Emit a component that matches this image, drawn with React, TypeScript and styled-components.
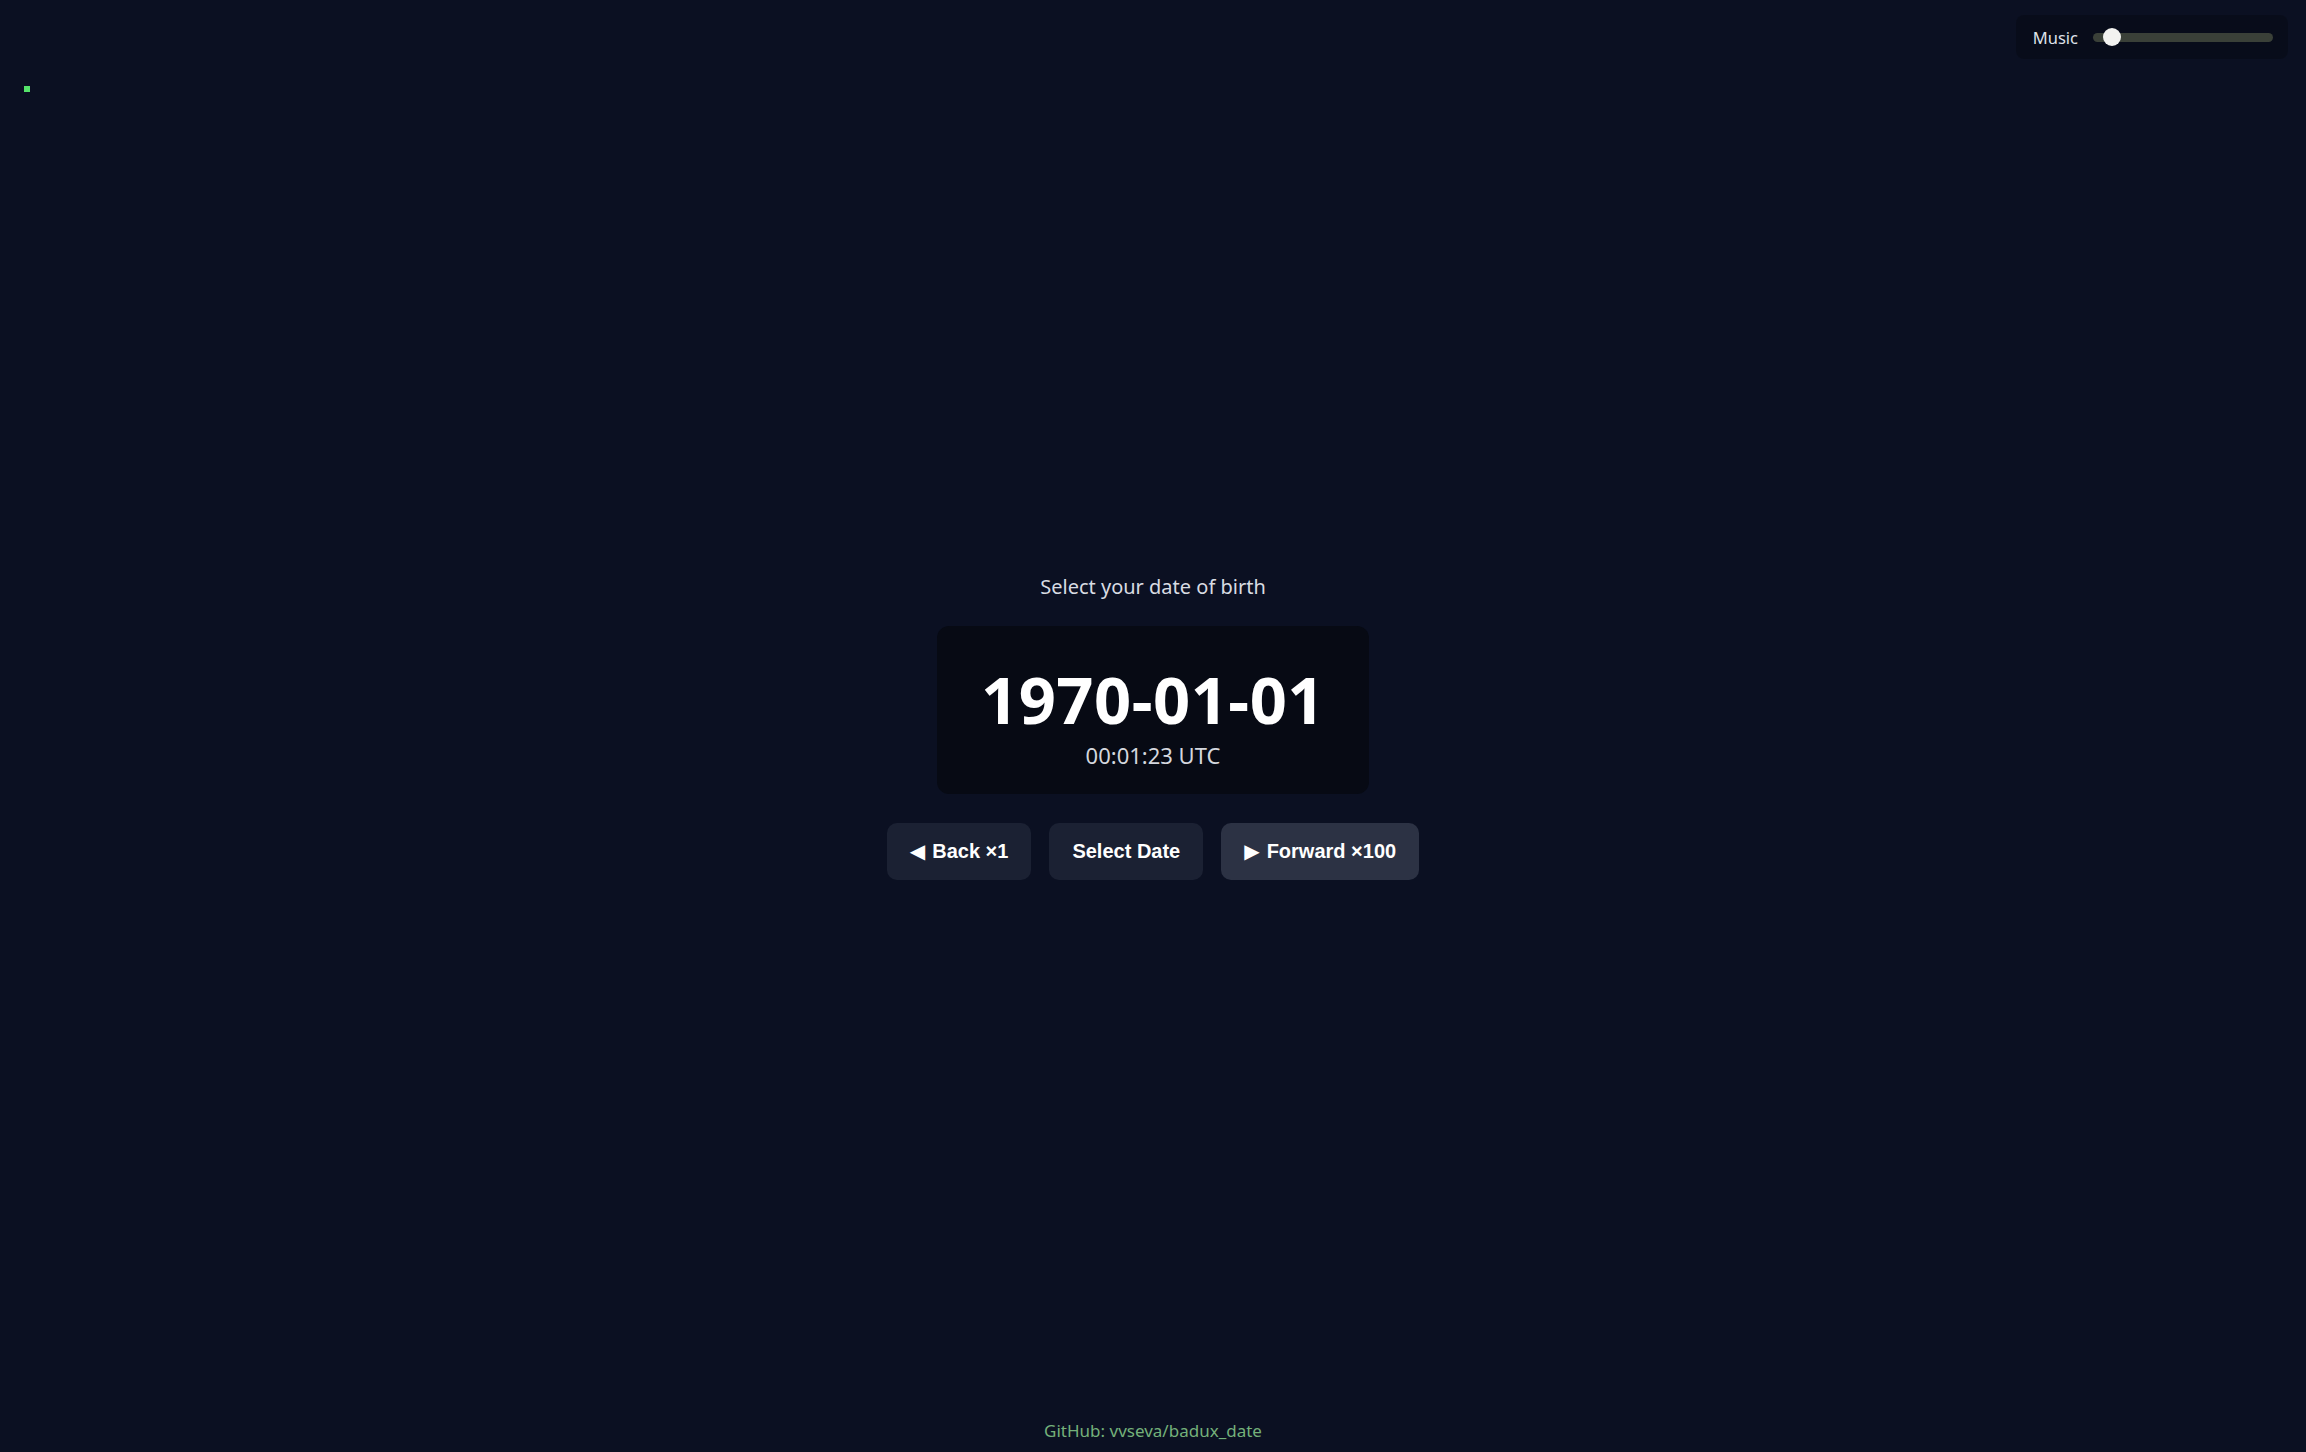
import React, { useState } from "react";
import styled, { createGlobalStyle } from "styled-components";

const GlobalStyle = createGlobalStyle`
  html, body { margin: 0; padding: 0; background: #0b1022; }
  body { font-family: "Noto Sans", "Open Sans", sans-serif; color: #e6e8ee; }
  * { box-sizing: border-box; }
`;

const Page = styled.div`
  min-height: 100vh;
  display: grid;
  grid-template-rows: 100px 1fr 100px;
  background: #0b1022;
`;

const TopBar = styled.header`
  display: flex;
  justify-content: space-between;
  align-items: flex-start;
  padding: 15px 18px 0 24px;
`;

const StatusDot = styled.span`
  width: 6px;
  height: 6px;
  margin-top: 71px;
  background: #55e36a;
`;

const MusicPanel = styled.div`
  display: flex;
  align-items: center;
  gap: 15px;
  height: 44px;
  padding: 0 15px 0 17px;
  border-radius: 8px;
  background: rgba(0, 0, 0, 0.22);
`;

const MusicLabel = styled.span`
  font-size: 16.5px;
  color: #dfe2e8;
`;

const Slider = styled.input`
  -webkit-appearance: none;
  appearance: none;
  width: 180px;
  height: 9px;
  margin: 0;
  border-radius: 5px;
  background: #3a4038;
  outline: none;
  &::-webkit-slider-thumb {
    -webkit-appearance: none;
    appearance: none;
    width: 18px;
    height: 18px;
    border-radius: 50%;
    background: #f2f2f0;
    border: none;
    cursor: pointer;
  }
`;

const Main = styled.main`
  display: flex;
  flex-direction: column;
  align-items: center;
  justify-content: center;
`;

const Prompt = styled.div`
  font-size: 20px;
  color: #d9dce3;
  margin-bottom: 26px;
`;

const Card = styled.div`
  width: 432px;
  height: 168px;
  border-radius: 12px;
  background: #070a14;
  display: flex;
  flex-direction: column;
  align-items: center;
  justify-content: flex-start;
  gap: 10px;
  padding-top: 41px;
`;

const DateText = styled.div`
  font-size: 65px;
  font-weight: 700;
  line-height: 1;
  color: #ffffff;
  letter-spacing: 0.5px;
`;

const TimeText = styled.div`
  font-size: 22px;
  line-height: 1.2;
  color: #d4d7de;
`;

const ButtonRow = styled.div`
  display: flex;
  gap: 18px;
  margin-top: 29px;
`;

const Button = styled.button<{ $hover?: boolean }>`
  height: 57px;
  padding: 0 23px;
  border: none;
  border-radius: 10px;
  font-family: "Liberation Sans", Arial, sans-serif;
  font-weight: 700;
  font-size: 20px;
  color: #ffffff;
  background: ${(p) => (p.$hover ? "#2c3244" : "#1b2133")};
  cursor: pointer;
  display: flex;
  align-items: center;
  gap: 7px;
`;

const Arrow = styled.span`
  font-family: "DejaVu Sans", sans-serif;
  font-size: 20px;
  line-height: 1;
`;

const Footer = styled.footer`
  display: flex;
  justify-content: center;
  align-items: flex-end;
  padding-bottom: 10px;
`;

const RepoLink = styled.a`
  font-size: 17px;
  color: #74b07a;
  text-decoration: none;
`;

export default function App() {
  const [volume, setVolume] = useState(6);
  return (
    <>
      <GlobalStyle />
      <Page>
        <TopBar>
          <StatusDot />
          <MusicPanel>
            <MusicLabel>Music</MusicLabel>
            <Slider
              type="range"
              min={0}
              max={100}
              value={volume}
              onChange={(e) => setVolume(Number(e.target.value))}
            />
          </MusicPanel>
        </TopBar>
        <Main>
          <Prompt>Select your date of birth</Prompt>
          <Card>
            <DateText>1970-01-01</DateText>
            <TimeText>00:01:23 UTC</TimeText>
          </Card>
          <ButtonRow>
            <Button>
              <Arrow>◀</Arrow>Back ×1
            </Button>
            <Button>Select Date</Button>
            <Button $hover>
              <Arrow>▶</Arrow>Forward ×100
            </Button>
          </ButtonRow>
        </Main>
        <Footer>
          <RepoLink href="#">GitHub: vvseva/badux_date</RepoLink>
        </Footer>
      </Page>
    </>
  );
}
